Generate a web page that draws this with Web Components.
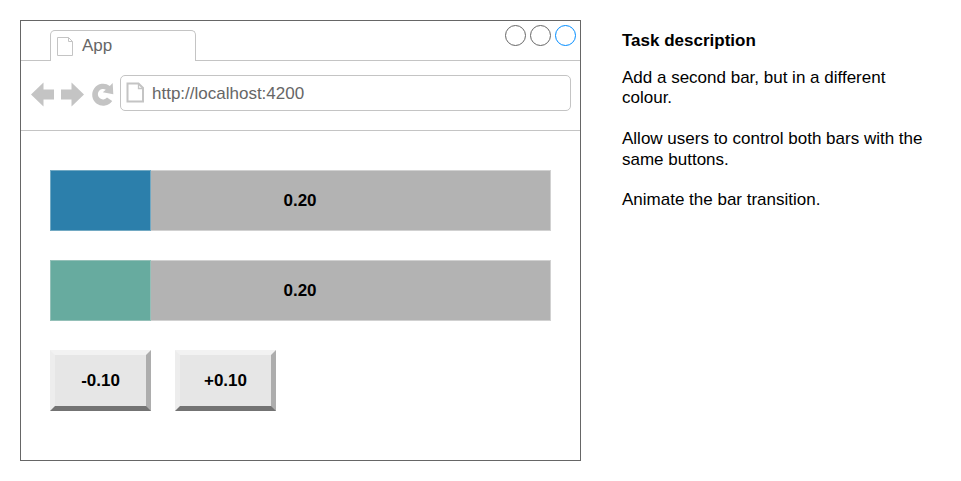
<!DOCTYPE html>
<html lang="en"><head><meta charset="utf-8"><title>App</title>
<style>
body{margin:0;padding:20px;background:#fff;color:#000;font:17px/20.4px "Liberation Sans",Arial,sans-serif;display:flex;gap:41px;align-items:flex-start;width:921px;height:441px;box-sizing:content-box;overflow:hidden}
.controls{display:flex;gap:24px}
</style></head><body>
<browser-window tab="App" url="http://localhost:4200">
<value-bar value="0.20" style="--fill:#2c7fab;--edge:#72a9c3"></value-bar>
<value-bar value="0.20" style="--fill:#67ab9f;--edge:#94c0b8"></value-bar>
<div class="controls"><bevel-button>-0.10</bevel-button><bevel-button>+0.10</bevel-button></div>
</browser-window>
<task-note heading="Task description">
<p>Add a second bar, but in a different<br>colour.</p>
<p>Allow users to control both bars with the<br>same buttons.</p>
<p>Animate the bar transition.</p>
</task-note>
<script>
class BrowserWindow extends HTMLElement{
 constructor(){super();this.attachShadow({mode:'open'}).innerHTML=`<style>
:host{display:block;box-sizing:border-box;flex:none;width:561px;height:441px;border:1px solid #666}
*{box-sizing:border-box}svg{display:block;flex:none}
.top{height:40px;display:flex;align-items:flex-end;color:#666}
.line{border-bottom:1px solid #c4c4c4;width:29px}
.tab{width:146px;height:31px;border:1px solid #c4c4c4;border-bottom:0;border-radius:5px 5px 0 0;display:flex;align-items:center;padding:0 0 0 6px;gap:8px}
.tab svg{margin-top:1px}
.rest{flex:1;align-self:stretch;border-bottom:1px solid #c4c4c4;display:flex;justify-content:flex-end;padding:4px 4px 0 0;gap:3px}
.dot{width:22px;height:22px}
.nav{height:70px;border-bottom:1px solid #c4c4c4;display:flex;align-items:flex-start;padding:14px 9px 0 9px;color:#666}
.url{flex:1;height:36px;border:1px solid #c4c4c4;border-radius:5px;display:flex;align-items:center;padding-left:5px;gap:7px}
.address{padding-top:2px}
.content{padding:39px 29px;display:flex;flex-direction:column;gap:29px}
</style>
<div class="top"><span class="line"></span><div class="tab"><svg width="17" height="20" fill="none" stroke="#c4c4c4"><path d="M.5.5h11l4 4v14H.5zM11.5.5v4h4"/></svg><span class="name"></span></div>
<div class="rest"><svg class="dot"><circle cx="11.5" cy="10.5" r="10" fill="#fff" stroke="#666"/></svg><svg class="dot"><circle cx="11.5" cy="10.5" r="10" fill="#fff" stroke="#666"/></svg><svg class="dot"><circle cx="11.5" cy="10.5" r="10" fill="#fff" stroke="#008cff"/></svg></div></div>
<div class="nav"><svg width="90" height="36" fill="#c4c4c4"><path d="M1 19.5 13.5 7.5V14.5H24V24.5H13.5V31.5zM54 19.5 41.5 7.5V14.5H31V24.5H41.5V31.5z"/><path d="M79.8 10.9 82.7 8 83.3 19.2 72.8 17.2 75.8 14.8A5.2 5.2 0 1 0 77 22.6L82.2 26A11 11 0 1 1 79.8 10.9z"/></svg>
<div class="url"><svg width="19" height="22" fill="none" stroke="#c4c4c4" stroke-width="2"><path d="M1.5 1.5h11l4.5 4.5v13.5H1.5z"/><path stroke-width="1.3" d="M12.5 2v4.5H17"/></svg><span class="address"></span></div></div>
<div class="content"><slot></slot></div>`}
 connectedCallback(){this.shadowRoot.querySelector('.name').textContent=this.getAttribute('tab');this.shadowRoot.querySelector('.address').textContent=this.getAttribute('url')}
}
class ValueBar extends HTMLElement{
 constructor(){super();this.attachShadow({mode:'open'}).innerHTML=`<style>
:host{display:grid;width:501px;height:61px;box-sizing:border-box;font-weight:bold}
div{grid-area:1/1;box-sizing:border-box}.track{background:#b3b3b3;border:1px solid #d1d1d1}
.fill{background:var(--fill);border:1px solid var(--edge);transition:width .3s}
.label{place-self:center;padding:1px 1px 0 0}</style><div class="track"></div><div class="fill"></div><div class="label"></div>`}
 connectedCallback(){const v=this.getAttribute('value');this.shadowRoot.querySelector('.fill').style.width='calc('+v*500+'px + 1px)';this.shadowRoot.querySelector('.label').textContent=v}
}
class BevelButton extends HTMLElement{
 constructor(){super();this.attachShadow({mode:'open'}).innerHTML=`<style>
:host{display:flex;align-items:center;justify-content:center;width:101px;height:61px;box-sizing:border-box;background:#e6e6e6;border:5px solid;border-color:#f2f2f2 #adadad #737373 #ededed;font-weight:bold;padding-top:1px;cursor:pointer}
</style><slot></slot>`}
}
class TaskNote extends HTMLElement{
 constructor(){super();this.attachShadow({mode:'open'}).innerHTML=`<style>
:host{display:block;flex:1;padding-top:11px;white-space:nowrap}h1{font-size:17px;line-height:20px;margin:0 0 17px}
::slotted(p){margin:0 0 20.4px}</style><h1></h1><slot></slot>`}
 connectedCallback(){this.shadowRoot.querySelector('h1').textContent=this.getAttribute('heading')}
}
customElements.define('browser-window',BrowserWindow);
customElements.define('value-bar',ValueBar);
customElements.define('bevel-button',BevelButton);
customElements.define('task-note',TaskNote);
</script></body></html>
